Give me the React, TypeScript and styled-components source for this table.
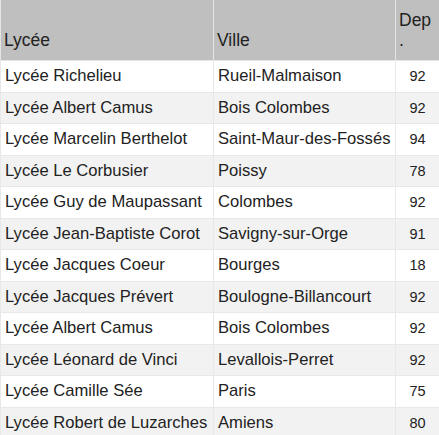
import styled, { createGlobalStyle } from "styled-components";

const GlobalStyle = createGlobalStyle`
  body {
    margin: 0;
    background: #ffffff;
    font-family: "Liberation Sans", Arial, sans-serif;
    color: #222222;
  }
`;

const Table = styled.table`
  width: 439px;
  border-collapse: collapse;
  table-layout: fixed;
  font-size: 16.6px;
`;

const Col = styled.col<{ $width: number }>`
  width: ${(p) => p.$width}px;
`;

const HeadCell = styled.th`
  background-color: #bfbfbf;
  border: 1px solid #e4e4e4;
  border-top: none;
  padding: 11px 2px 10px 3px;
  text-align: left;
  vertical-align: bottom;
  font-weight: normal;
  font-size: 17.5px;
  line-height: 19.5px;
  white-space: nowrap;
  color: #222222;
`;

const Row = styled.tr`
  &:nth-child(even) {
    background-color: #f2f2f2;
  }
`;

const Cell = styled.td<{ $num?: boolean }>`
  border: 1px solid #e8e8e8;
  padding: 6px 4px;
  line-height: 18.5px;
  white-space: nowrap;
  overflow: hidden;
  text-align: ${(p) => (p.$num ? "center" : "left")};
  font-size: ${(p) => (p.$num ? "14.5px" : "16.6px")};
`;

const lycees = [
  ["Lycée Richelieu", "Rueil-Malmaison", "92"],
  ["Lycée Albert Camus", "Bois Colombes", "92"],
  ["Lycée Marcelin Berthelot", "Saint-Maur-des-Fossés", "94"],
  ["Lycée Le Corbusier", "Poissy", "78"],
  ["Lycée Guy de Maupassant", "Colombes", "92"],
  ["Lycée Jean-Baptiste Corot", "Savigny-sur-Orge", "91"],
  ["Lycée Jacques Coeur", "Bourges", "18"],
  ["Lycée Jacques Prévert", "Boulogne-Billancourt", "92"],
  ["Lycée Albert Camus", "Bois Colombes", "92"],
  ["Lycée Léonard de Vinci", "Levallois-Perret", "92"],
  ["Lycée Camille Sée", "Paris", "75"],
  ["Lycée Robert de Luzarches", "Amiens", "80"],
];

const App: React.FC = () => {
  return (
    <>
      <GlobalStyle />
      <Table>
        <colgroup>
          <Col $width={213} />
          <Col $width={182} />
          <Col $width={44} />
        </colgroup>
        <thead>
          <tr>
            <HeadCell>Lycée</HeadCell>
            <HeadCell>Ville</HeadCell>
            <HeadCell>
              Dep
              <br />.
            </HeadCell>
          </tr>
        </thead>
        <tbody>
          {lycees.map(([name, city, dep], i) => (
            <Row key={i}>
              <Cell>{name}</Cell>
              <Cell>{city}</Cell>
              <Cell $num>{dep}</Cell>
            </Row>
          ))}
        </tbody>
      </Table>
    </>
  );
};

export default App;
